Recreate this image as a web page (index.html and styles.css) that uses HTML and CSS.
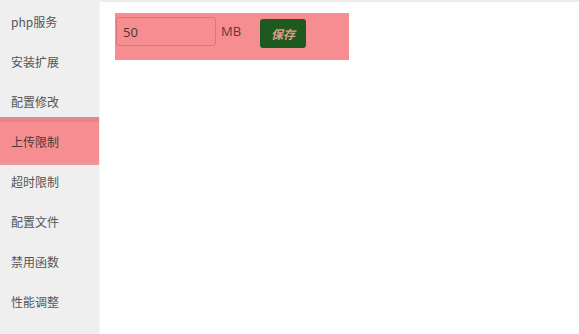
FILE: index.html
```html
<!DOCTYPE html>
<html>
<head>
<meta charset="utf-8">
<link rel="stylesheet" href="styles.css">
</head>
<body>
<div class="layout">
  <ul class="menu">
    <li class="item">php服务</li>
    <li class="item">安装扩展</li>
    <li class="item">配置修改</li>
    <li class="item active">上传限制</li>
    <li class="item">超时限制</li>
    <li class="item">配置文件</li>
    <li class="item">禁用函数</li>
    <li class="item">性能调整</li>
  </ul>
  <div class="main">
    <div class="panel">
      <input class="field" type="text" value="50">
      <span class="unit">MB</span>
      <button class="save">保存</button>
    </div>
  </div>
</div>
</body>
</html>
```
FILE: styles.css
```css
html, body {
  margin: 0;
  padding: 0;
  height: 100%;
  background: #fff;
  font-family: "Noto Sans CJK SC", "Open Sans", sans-serif;
}
.layout {
  display: flex;
  height: 334px;
}
.menu {
  list-style: none;
  margin: 0;
  padding: 2px 0 0 0;
  width: 99px;
  background: #efefef;
  border-right: 1px solid #f6f6f6;
}
.item {
  height: 40px;
  line-height: 40px;
  padding-left: 11px;
  font-size: 12px;
  color: #555;
}
.item.active {
  background: #f68e91;
  color: #4a3a3a;
  position: relative;
  box-shadow: 0 -5px 0 #e4878a, 0 3px 0 #ec9a9c;
}
.main {
  flex: 1;
  border-top: 2px solid #ececec;
  padding: 11px 0 0 15px;
}
.panel {
  display: flex;
  align-items: center;
  width: 234px;
  height: 47px;
  box-sizing: border-box;
  padding: 0 0 0 1px;
  background: #f68e91;
  align-items: flex-start;
}
.field {
  margin-top: 4px;
  width: 100px;
  height: 29px;
  box-sizing: border-box;
  border: 1px solid #d9787c;
  border-radius: 3px;
  background: #f68e91;
  padding: 0 6px;
  font-family: "Open Sans", sans-serif;
  font-size: 13px;
  color: #4a3434;
  outline: none;
}
.unit {
  margin-left: 5px;
  margin-top: 4px;
  line-height: 29px;
  font-family: "Open Sans", sans-serif;
  font-size: 13px;
  color: #5a3a3a;
}
.save {
  margin-left: 19px;
  margin-top: 6px;
  width: 46px;
  height: 29px;
  border: none;
  border-radius: 3px;
  background: #1e5a20;
  color: #e09a8e;
  font-family: "Noto Sans CJK SC", sans-serif;
  font-size: 12px;
  font-weight: bold;
  font-style: italic;
  padding: 0;
}
```
